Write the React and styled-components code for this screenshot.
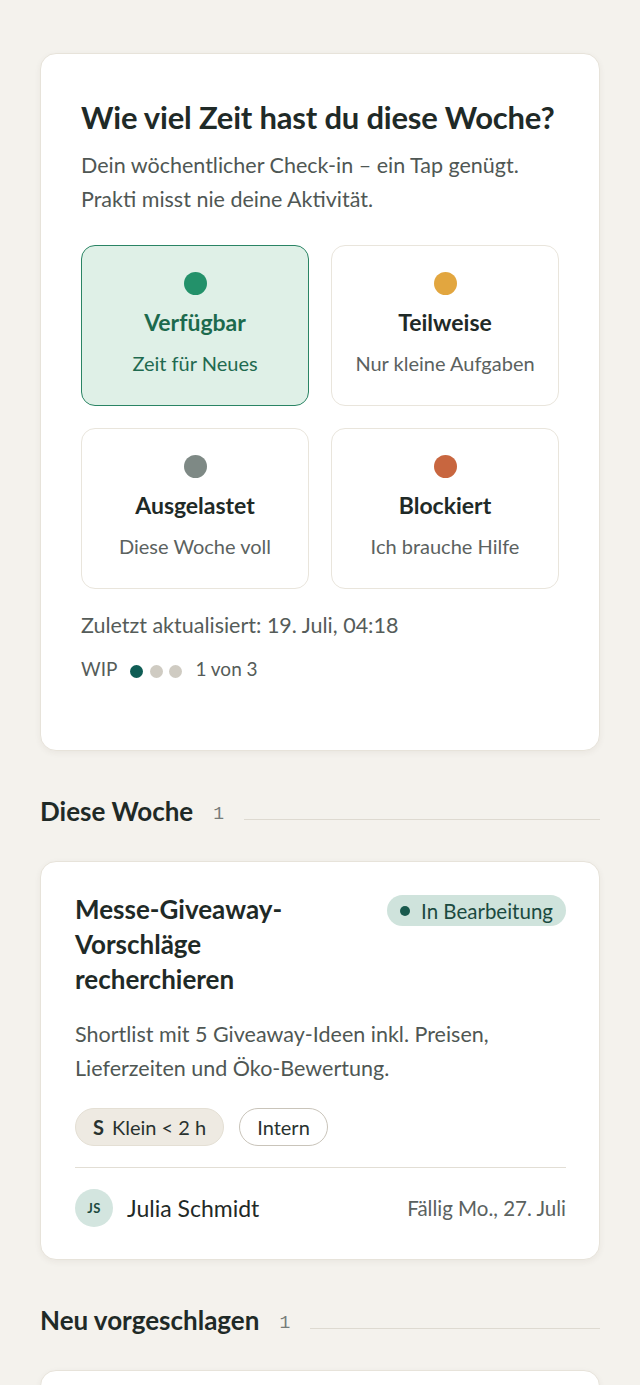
import React from "react";
import styled, { createGlobalStyle } from "styled-components";

const Global = createGlobalStyle`
  html, body { margin: 0; padding: 0; background: #f4f2ed; }
  body { font-family: "Lato", "Noto Sans", sans-serif; color: #1f2a27; }
  * { box-sizing: border-box; }
`;

const Page = styled.main`
  padding: 53px 40px 0;
  display: flex;
  flex-direction: column;
`;

const Card = styled.section`
  background: #ffffff;
  border: 1px solid #e7e3da;
  border-radius: 16px;
  box-shadow: 0 2px 6px rgba(60, 50, 30, 0.06);
  padding: ${(p) => p.$pad || "40px"};
`;

const Title = styled.h1`
  margin: 0;
  font-size: 31px;
  font-weight: 700;
  line-height: 40px;
  letter-spacing: -0.2px;
  white-space: nowrap;
`;

const Lead = styled.p`
  margin: 11px 0 0;
  font-size: 21.5px;
  line-height: 34px;
  color: #4f5754;
`;

const OptionGrid = styled.div`
  margin-top: 29px;
  display: grid;
  grid-template-columns: 1fr 1fr;
  gap: 22px;
`;

const Option = styled.button`
  height: 161px;
  border-radius: 14px;
  border: ${(p) => (p.$active ? "1.5px solid #2a8464" : "1.5px solid #e9e5dc")};
  background: ${(p) => (p.$active ? "#dff0e7" : "#ffffff")};
  display: flex;
  flex-direction: column;
  align-items: center;
  justify-content: flex-start;
  padding: 26px 0 0;
  font-family: inherit;
  cursor: pointer;
`;

const Dot = styled.span`
  width: ${(p) => p.$size || 23}px;
  height: ${(p) => p.$size || 23}px;
  border-radius: 50%;
  background: ${(p) => p.$color};
  display: inline-block;
  flex: none;
`;

const OptionLabel = styled.span`
  margin-top: 12.5px;
  font-size: 23px;
  line-height: 28px;
  font-weight: 700;
  color: ${(p) => (p.$active ? "#1c6a4d" : "#1f2a27")};
`;

const OptionSub = styled.span`
  margin-top: 15px;
  font-size: 20px;
  line-height: 24px;
  color: ${(p) => (p.$active ? "#1f6a50" : "#5b625f")};
`;

const Meta = styled.p`
  margin: 23px 0 0;
  font-size: 21.5px;
  line-height: 26px;
  color: #555c59;
`;

const WipRow = styled.div`
  margin-top: 20px;
  display: flex;
  align-items: center;
  gap: 13px;
  font-size: 19px;
  line-height: 22px;
  color: #555c59;
`;

const Dots = styled.div`
  display: flex;
  gap: 6.5px;
  align-items: center;
  margin-top: 5px;
`;

const SectionHead = styled.div`
  display: flex;
  align-items: center;
  margin: 45px 0 35px;
`;

const SectionTitle = styled.h2`
  margin: 0;
  font-size: 26px;
  line-height: 30px;
  font-weight: 700;
`;

const Count = styled.span`
  margin-left: 20px;
  font-family: "Liberation Mono", "DejaVu Sans Mono", monospace;
  font-size: 18px;
  color: #767c79;
  padding-top: 6px;
`;

const Rule = styled.div`
  flex: 1;
  height: 1px;
  background: #dedad1;
  margin-left: 20px;
  margin-top: 16px;
`;

const TaskTop = styled.div`
  display: flex;
  justify-content: space-between;
  align-items: flex-start;
  gap: 16px;
`;

const TaskTitle = styled.h3`
  margin: 0;
  font-size: 26px;
  font-weight: 700;
  line-height: 35px;
  max-width: 260px;
`;

const Status = styled.span`
  display: inline-flex;
  align-items: center;
  gap: 11px;
  height: 31px;
  background: #cfe3dc;
  color: #1b4a40;
  border-radius: 999px;
  padding: 0 13px;
  font-size: 20.5px;
  line-height: 24px;
  white-space: nowrap;
  margin-top: 3px;
`;

const TaskDesc = styled.p`
  margin: 20px 0 0;
  font-size: 21.5px;
  line-height: 34px;
  color: #4f5754;
`;

const Tags = styled.div`
  margin-top: 23px;
  display: flex;
  gap: 15px;
`;

const Tag = styled.span`
  display: inline-flex;
  align-items: center;
  gap: 8px;
  height: 38px;
  padding: 0 17px;
  border-radius: 999px;
  font-size: 20px;
  color: #29322f;
  background: ${(p) => (p.$filled ? "#eeeae2" : "#ffffff")};
  border: 1.5px solid ${(p) => (p.$filled ? "#e4dfd4" : "#c9c4ba")};
`;

const TagStrong = styled.b`
  font-weight: 700;
`;

const Divider = styled.hr`
  margin: 21px 0 0;
  border: none;
  height: 1px;
  background: #e2ded5;
`;

const Footer = styled.div`
  margin-top: 21px;
  display: flex;
  align-items: center;
  justify-content: space-between;
`;

const Person = styled.div`
  display: flex;
  align-items: center;
  gap: 14px;
  font-size: 23px;
  color: #1f2a27;
`;

const Avatar = styled.span`
  width: 38px;
  height: 38px;
  border-radius: 50%;
  background: #d3e5df;
  color: #1d4a40;
  font-size: 13px;
  font-weight: 700;
  display: flex;
  align-items: center;
  justify-content: center;
  letter-spacing: 0.5px;
`;

const Due = styled.span`
  font-size: 20.5px;
  color: #5b625f;
`;

const options = [
  { label: "Verfügbar", sub: "Zeit für Neues", color: "#23916a", active: true },
  { label: "Teilweise", sub: "Nur kleine Aufgaben", color: "#e2a63f" },
  { label: "Ausgelastet", sub: "Diese Woche voll", color: "#7e8985" },
  { label: "Blockiert", sub: "Ich brauche Hilfe", color: "#c8663f" },
];

export default function App() {
  return (
    <>
      <Global />
      <Page>
        <Card $pad="43px 40px 70px">
          <Title>Wie viel Zeit hast du diese Woche?</Title>
          <Lead>
            Dein wöchentlicher Check-in – ein Tap genügt.
            <br />
            Prakti misst nie deine Aktivität.
          </Lead>
          <OptionGrid>
            {options.map((o) => (
              <Option key={o.label} $active={o.active}>
                <Dot $color={o.color} />
                <OptionLabel $active={o.active}>{o.label}</OptionLabel>
                <OptionSub $active={o.active}>{o.sub}</OptionSub>
              </Option>
            ))}
          </OptionGrid>
          <Meta>Zuletzt aktualisiert: 19. Juli, 04:18</Meta>
          <WipRow>
            <span>WIP</span>
            <Dots>
              <Dot $size={13} $color="#0f5d55" />
              <Dot $size={13} $color="#cfcbc2" />
              <Dot $size={13} $color="#cfcbc2" />
            </Dots>
            <span>1 von 3</span>
          </WipRow>
        </Card>

        <SectionHead>
          <SectionTitle>Diese Woche</SectionTitle>
          <Count>1</Count>
          <Rule />
        </SectionHead>

        <Card $pad="30px 33px 32px 34px">
          <TaskTop>
            <TaskTitle>Messe-Giveaway-Vorschläge recherchieren</TaskTitle>
            <Status>
              <Dot $size={10} $color="#1a5a4e" />
              In Bearbeitung
            </Status>
          </TaskTop>
          <TaskDesc>
            Shortlist mit 5 Giveaway-Ideen inkl. Preisen, Lieferzeiten und Öko-Bewertung.
          </TaskDesc>
          <Tags>
            <Tag $filled>
              <TagStrong>S</TagStrong> Klein &lt; 2 h
            </Tag>
            <Tag>Intern</Tag>
          </Tags>
          <Divider />
          <Footer>
            <Person>
              <Avatar>JS</Avatar>
              Julia Schmidt
            </Person>
            <Due>Fällig Mo., 27. Juli</Due>
          </Footer>
        </Card>

        <SectionHead>
          <SectionTitle>Neu vorgeschlagen</SectionTitle>
          <Count>1</Count>
          <Rule />
        </SectionHead>

        <Card $pad="40px">
          <Title as="div">&nbsp;</Title>
        </Card>
      </Page>
    </>
  );
}
